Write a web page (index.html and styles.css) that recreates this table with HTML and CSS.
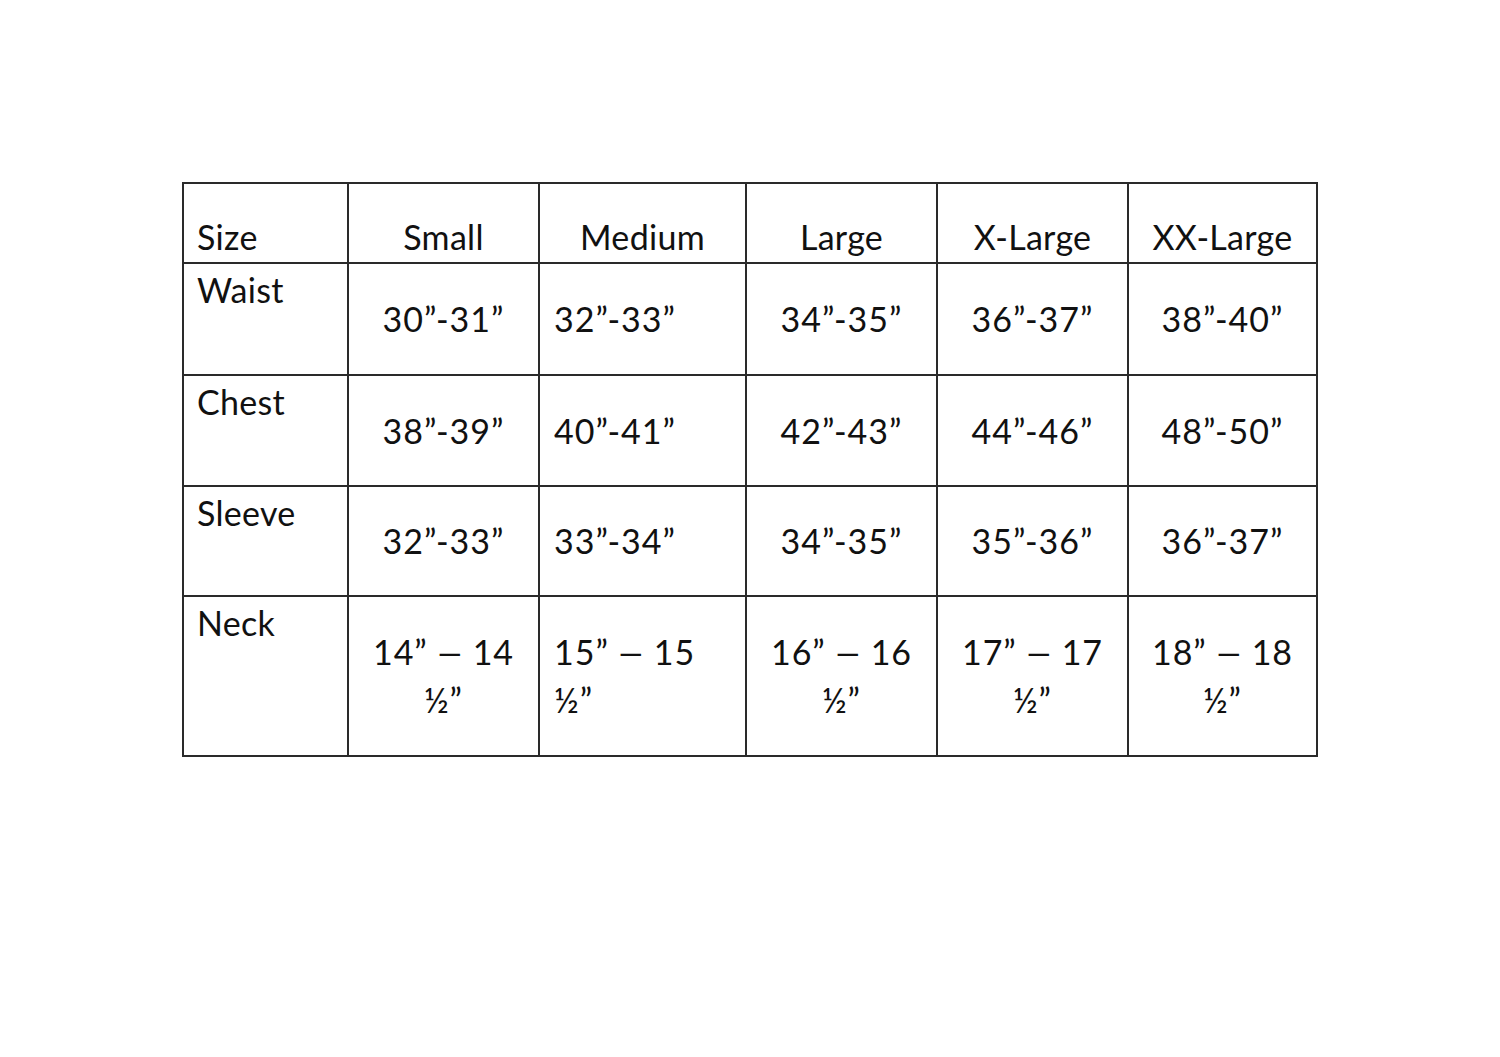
FILE: index.html
```html
<!DOCTYPE html>
<html>
<head>
<meta charset="utf-8">
<link rel="stylesheet" href="styles.css">
</head>
<body>
<table class="chart">
  <colgroup>
    <col class="c-label"><col class="c-s"><col class="c-m"><col class="c-l"><col class="c-xl"><col class="c-xxl">
  </colgroup>
  <tr class="head">
    <th class="label">Size</th><th>Small</th><th>Medium</th><th>Large</th><th>X-Large</th><th>XX-Large</th>
  </tr>
  <tr class="r1">
    <td class="label">Waist</td><td>30”-31”</td><td class="left">32”-33”</td><td>34”-35”</td><td>36”-37”</td><td>38”-40”</td>
  </tr>
  <tr class="r2">
    <td class="label">Chest</td><td>38”-39”</td><td class="left">40”-41”</td><td>42”-43”</td><td>44”-46”</td><td>48”-50”</td>
  </tr>
  <tr class="r3">
    <td class="label">Sleeve</td><td>32”-33”</td><td class="left">33”-34”</td><td>34”-35”</td><td>35”-36”</td><td>36”-37”</td>
  </tr>
  <tr class="r4">
    <td class="label">Neck</td><td>14” <span class="dash">–</span> 14<br>½”</td><td class="left">15” <span class="dash">–</span> 15<br>½”</td><td>16” <span class="dash">–</span> 16<br>½”</td><td>17” <span class="dash">–</span> 17<br>½”</td><td>18” <span class="dash">–</span> 18<br>½”</td>
  </tr>
</table>
</body>
</html>
```
FILE: styles.css
```css
html, body {
  margin: 0;
  padding: 0;
  background: #ffffff;
}
body {
  font-family: Lato, "Open Sans", sans-serif;
  color: #111111;
}
.chart {
  border-collapse: collapse;
  table-layout: fixed;
  margin: 182px 0 0 182px;
  width: 1134px;
}
.c-label { width: 165px; }
.c-s { width: 191px; }
.c-m { width: 207px; }
.c-l { width: 191px; }
.c-xl { width: 191px; }
.c-xxl { width: 189px; }
.chart th, .chart td {
  border: 2px solid #2a2a2a;
  font-size: 34px;
  font-weight: 400;
  line-height: 48px;
  padding: 0 4px;
  text-align: center;
  vertical-align: middle;
}
.chart td {
  letter-spacing: 1px;
}
.chart th {
  vertical-align: bottom;
  padding-bottom: 1px;
  letter-spacing: 0.3px;
}
.chart .label {
  text-align: left;
  vertical-align: top;
  padding-left: 13px;
  letter-spacing: 0.3px;
}
.chart th.label {
  vertical-align: bottom;
}
.chart td.label {
  padding-top: 2px;
}
.chart .left {
  text-align: left;
  padding-left: 14px;
}
.dash {
  display: inline-block;
  transform: scaleX(1.5);
  letter-spacing: 0;
  margin: 0 3px;
}
.head { height: 80px; }
.r1 { height: 112px; }
.r2 { height: 111px; }
.r3 { height: 110px; }
.r4 { height: 160px; }
```
